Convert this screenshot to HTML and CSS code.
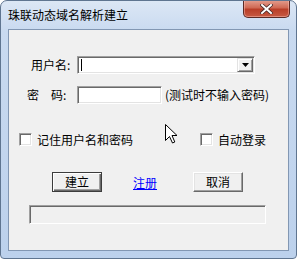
FILE: index.html
```html
<!DOCTYPE html>
<html>
<head>
<meta charset="utf-8">
<link rel="stylesheet" href="styles.css">
</head>
<body>
<div class="window">
  <div class="titlebar">
    <span class="title">珠联动态域名解析建立</span>
    <div class="close">
      <svg width="13" height="10" viewBox="0 0 13 10">
        <path d="M2 1 L11 9 M11 1 L2 9" stroke="#4a2a28" stroke-width="3.6" stroke-linecap="square"/>
        <path d="M2 1 L11 9 M11 1 L2 9" stroke="#ffffff" stroke-width="2" stroke-linecap="square"/>
      </svg>
    </div>
  </div>
  <div class="client">
    <div class="row row-user">
      <span class="label label-user">用户名:</span>
      <div class="combo sunken">
        <span class="caret"></span>
        <span class="drop">
          <svg width="7" height="4" viewBox="0 0 7 4"><path d="M0 0 H7 L3.5 4 Z" fill="#000"/></svg>
        </span>
      </div>
    </div>
    <div class="row row-pass">
      <span class="label label-pass">密　码:</span>
      <div class="pass sunken"></div>
      <span class="note">(测试时不输入密码)</span>
    </div>
    <div class="row row-check">
      <div class="check-group first">
        <span class="checkbox"></span>
        <span class="check-label">记住用户名和密码</span>
      </div>
      <div class="check-group">
        <span class="checkbox"></span>
        <span class="check-label">自动登录</span>
      </div>
    </div>
    <div class="row row-buttons">
      <div class="button default">建立</div>
      <span class="link-box"><a class="link">注册</a></span>
      <div class="button">取消</div>
    </div>
    <div class="status"></div>
    <svg class="cursor" width="13" height="20" viewBox="0 0 13 20">
      <path d="M0.5 0.5 L0.5 16.5 L4.5 12.5 L7.5 19 L9.8 18 L7 11.5 L12 11.5 Z" fill="#ffffff" stroke="#000000" stroke-width="1" stroke-linejoin="miter"/>
    </svg>
  </div>
</div>
</body>
</html>
```

FILE: styles.css
```css
html, body {
  margin: 0;
  padding: 0;
  background: #ffffff;
}

body {
  font-family: "Noto Sans CJK SC", "Noto Sans", sans-serif;
  font-size: 12px;
  color: #000000;
}

.window {
  box-sizing: border-box;
  width: 297px;
  height: 259px;
  border: 1px solid #5f7590;
  border-radius: 7px 7px 4px 4px;
  background: linear-gradient(#dce7f5 0px, #c9daf0 30px, #bcd1ec 100%);
  display: flex;
  flex-direction: column;
  overflow: hidden;
}

.titlebar {
  height: 28px;
  display: flex;
  justify-content: space-between;
  align-items: flex-start;
  padding: 0 6px 0 7px;
  flex: none;
}

.title {
  margin-top: 6px;
  line-height: 16px;
  color: #000000;
}

.close {
  width: 47px;
  height: 18px;
  box-sizing: border-box;
  margin-top: -1px;
  border: 1px solid #5b2a25;
  border-top: none;
  border-radius: 0 0 5px 5px;
  background: linear-gradient(#e4a091 0%, #d06a55 45%, #b93e28 55%, #c75a42 100%);
  box-shadow: inset 0 0 0 1px rgba(255, 200, 190, 0.45);
  display: flex;
  align-items: center;
  justify-content: center;
}

.client {
  position: relative;
  box-sizing: border-box;
  height: 222px;
  margin: 0 7px;
  border: 1px solid #8297b3;
  background: #f0f0f0;
  padding-top: 26px;
  display: flex;
  flex-direction: column;
}

.row {
  display: flex;
  align-items: center;
}

.row-user {
  height: 18px;
}

.row-pass {
  height: 18px;
  margin-top: 12px;
}

.label {
  display: inline-block;
  line-height: 18px;
}

.label-user {
  margin-left: 22px;
  width: 46px;
}

.label-pass {
  margin-left: 18px;
  width: 50px;
}

.sunken {
  box-sizing: border-box;
  height: 18px;
  background: #ffffff;
  border-top: 1px solid #a0a0a0;
  border-left: 1px solid #a0a0a0;
  border-bottom: 1px solid #ffffff;
  border-right: 1px solid #ffffff;
  box-shadow: inset 1px 1px 0 #696969, inset -1px -1px 0 #e3e3e3;
}

.combo {
  width: 178px;
  position: relative;
  display: flex;
  align-items: center;
  justify-content: space-between;
}

.caret {
  width: 1px;
  height: 12px;
  background: #000000;
  margin-left: 3px;
}

.drop {
  box-sizing: border-box;
  width: 16px;
  height: 14px;
  margin-right: 1px;
  background: #f0f0f0;
  border-top: 1px solid #e3e3e3;
  border-left: 1px solid #e3e3e3;
  border-bottom: 1px solid #696969;
  border-right: 1px solid #696969;
  box-shadow: inset 1px 1px 0 #ffffff, inset -1px -1px 0 #a0a0a0;
  display: flex;
  align-items: center;
  justify-content: center;
}

.pass {
  width: 85px;
}

.note {
  margin-left: 3px;
  line-height: 18px;
}

.row-check {
  margin-top: 29px;
  height: 13px;
}

.check-group {
  display: flex;
  align-items: center;
}

.check-group.first {
  margin-left: 10px;
  width: 181px;
}

.checkbox {
  box-sizing: border-box;
  width: 13px;
  height: 13px;
  background: #ffffff;
  border-top: 1px solid #a0a0a0;
  border-left: 1px solid #a0a0a0;
  border-bottom: 1px solid #ffffff;
  border-right: 1px solid #ffffff;
  box-shadow: inset 1px 1px 0 #696969, inset -1px -1px 0 #e3e3e3;
}

.check-label {
  margin-left: 5px;
  line-height: 14px;
}

.row-buttons {
  margin-top: 26px;
  height: 20px;
}

.button {
  box-sizing: border-box;
  width: 50px;
  height: 20px;
  background: #f0f0f0;
  border-top: 1px solid #ffffff;
  border-left: 1px solid #ffffff;
  border-bottom: 1px solid #696969;
  border-right: 1px solid #696969;
  box-shadow: inset -1px -1px 0 #a0a0a0, inset 1px 1px 0 #e3e3e3;
  display: flex;
  align-items: center;
  justify-content: center;
  line-height: 16px;
}

.button:first-child {
  margin-left: 43px;
}

.button.default {
  border: 1px solid #3c3c3c;
  box-shadow: inset 1px 1px 0 #ffffff, inset -1px -1px 0 #696969, inset -2px -2px 0 #a0a0a0;
}

.link-box {
  display: inline-block;
  width: 60px;
  margin-left: 31px;
}

.link {
  color: #0000ff;
  text-decoration: underline;
  line-height: 16px;
}

.status {
  box-sizing: border-box;
  margin-top: 13px;
  margin-left: 20px;
  width: 237px;
  height: 19px;
  border-top: 1px solid #a0a0a0;
  border-left: 1px solid #a0a0a0;
  border-bottom: 1px solid #ffffff;
  border-right: 1px solid #ffffff;
  box-shadow: inset 1px 1px 0 #696969;
}

.cursor {
  position: absolute;
  left: 156px;
  top: 94px;
}
```
